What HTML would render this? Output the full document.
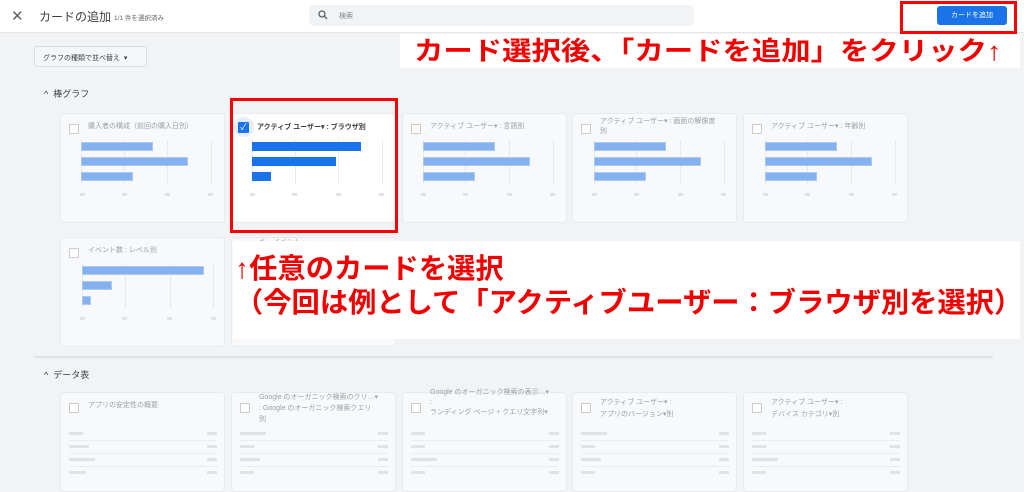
<!DOCTYPE html>
<html><head><meta charset="utf-8"><style>
*{margin:0;padding:0;box-sizing:border-box}
body{width:1024px;height:477px;overflow:hidden;background:#f1f3f4;font-family:"Liberation Sans","Noto Sans CJK JP",sans-serif;position:relative;color:#3c4043}
.a{position:absolute}
.card{position:absolute;width:165px;background:#f8f9fa;border:1px solid #e8eaed;border-radius:4px}
.cb{position:absolute;left:8px;top:10px;width:10px;height:10px;border:1px solid #c8cacd;border-radius:1px;background:#fff}
.t{position:absolute;left:27px;top:8px;font-size:7px;color:#9aa0a6;line-height:10px;width:135px;white-space:nowrap;overflow:hidden}
.g{position:absolute;width:1px;background:#e6e8ea}
.bar{position:absolute;height:9px;background:#85b2ee;border:1px solid #a9c8f2}
.tk{position:absolute;height:3px;width:5px;background:#e0e2e4}
.row{position:absolute;height:3px;background:#e0e2e4}
.ln{position:absolute;height:1px;background:#ebedef}
.red{color:#f20000;font-weight:bold;transform-origin:0 0}
</style></head><body>
<div class="a" style="left:0;top:0;width:1024px;height:33px;background:#fff;border-bottom:1px solid #e6e6e6"></div>
<div class="a" style="left:11px;top:7px;font-size:15px;color:#5f6368">✕</div>
<div class="a" style="left:39px;top:8px;font-size:12px;color:#3c4043">カードの追加</div>
<div class="a" style="left:114px;top:12px;font-size:6.5px;color:#5f6368">1/1 件を選択済み</div>
<div class="a" style="left:309px;top:5px;width:385px;height:21px;background:#f1f3f4;border-radius:5px"></div>
<svg class="a" style="left:318px;top:10px" width="10" height="10" viewBox="0 0 10 10"><circle cx="4" cy="4" r="3" fill="none" stroke="#5f6368" stroke-width="1.3"/><path d="M6.2 6.2L9 9" stroke="#5f6368" stroke-width="1.3"/></svg>
<div class="a" style="left:339px;top:11px;font-size:7px;color:#80868b">検索</div>
<div class="a" style="left:937px;top:6px;width:70px;height:19px;background:#1a73e8;border-radius:3px;color:#fff;font-size:7px;text-align:center;line-height:19px">カードを追加</div>
<div class="a" style="left:900px;top:1px;width:117px;height:33px;border:3px solid #f00"></div>

<div class="a" style="left:34px;top:46px;width:113px;height:21px;border:1px solid #dadce0;border-radius:3px;background:#f5f6f7;font-size:7px;color:#3c4043;padding:6px 0 0 8px">グラフの種類で並べ替え&nbsp;&nbsp;▾</div>
<div class="a" style="left:400px;top:34px;width:620px;height:34px;background:#fff"></div>
<div class="a red" style="left:414px;top:35px;font-size:26px;line-height:32px;white-space:nowrap;transform:scaleX(1.13)">カード選択後、「カードを追加」をクリック↑</div>

<div class="a" style="left:44px;top:87px;font-size:9px;color:#3c4043">^&nbsp;&nbsp;棒グラフ</div>

<div class="card" style="left:60px;top:113px;height:110px"><div class="cb"></div><div class="t">購入者の構成（前回の購入日別）</div></div>
<div class="card" style="left:231px;top:113px;height:110px;background:#fff"></div>
<div class="card" style="left:402px;top:113px;height:110px"><div class="cb"></div><div class="t">アクティブ ユーザー▾ : 言語別</div></div>
<div class="card" style="left:572px;top:113px;height:110px"><div class="cb"></div><div class="t" style="top:3px">アクティブ ユーザー▾ : 画面の解像度<br>別</div></div>
<div class="card" style="left:743px;top:113px;height:110px"><div class="cb"></div><div class="t">アクティブ ユーザー▾ : 年齢別</div></div>

<div class="g" style="left:81px;top:140px;height:44px"></div><div class="g" style="left:124px;top:140px;height:44px"></div><div class="g" style="left:167px;top:140px;height:44px"></div><div class="g" style="left:211px;top:140px;height:44px"></div>
<div class="bar" style="left:81px;top:142px;width:72px"></div><div class="bar" style="left:81px;top:157px;width:107px"></div><div class="bar" style="left:81px;top:172px;width:52px"></div>
<div class="tk" style="left:80px;top:193px"></div><div class="tk" style="left:122px;top:193px"></div><div class="tk" style="left:165px;top:193px"></div><div class="tk" style="left:208px;top:193px"></div>
<div class="g" style="left:252px;top:140px;height:44px"></div><div class="g" style="left:295px;top:140px;height:44px"></div><div class="g" style="left:338px;top:140px;height:44px"></div><div class="g" style="left:382px;top:140px;height:44px"></div>
<div class="bar" style="left:252px;top:142px;width:109px;background:#1a73e8;border-color:#1a73e8"></div><div class="bar" style="left:252px;top:157px;width:84px;background:#1a73e8;border-color:#1a73e8"></div><div class="bar" style="left:252px;top:172px;width:19px;background:#1a73e8;border-color:#1a73e8"></div>
<div class="tk" style="left:250px;top:193px"></div><div class="tk" style="left:292px;top:193px"></div><div class="tk" style="left:336px;top:193px"></div><div class="tk" style="left:379px;top:193px"></div>
<div class="a" style="left:234px;top:117px;width:20px;height:20px;border-radius:50%;background:#e3edfb"></div>
<div class="a" style="left:238px;top:122px;width:11px;height:11px;background:#1a73e8;border-radius:1px;color:#fff;font-size:9px;line-height:11px;text-align:center">✓</div>
<div class="a" style="left:257px;top:122px;font-size:7px;font-weight:bold;color:#3c4043">アクティブ ユーザー▾ : ブラウザ別</div>
<div class="g" style="left:423px;top:140px;height:44px"></div><div class="g" style="left:465px;top:140px;height:44px"></div><div class="g" style="left:509px;top:140px;height:44px"></div><div class="g" style="left:553px;top:140px;height:44px"></div>
<div class="bar" style="left:423px;top:142px;width:72px"></div><div class="bar" style="left:423px;top:157px;width:107px"></div><div class="bar" style="left:423px;top:172px;width:52px"></div>
<div class="tk" style="left:421px;top:193px"></div><div class="tk" style="left:463px;top:193px"></div><div class="tk" style="left:507px;top:193px"></div><div class="tk" style="left:550px;top:193px"></div>
<div class="g" style="left:594px;top:140px;height:44px"></div><div class="g" style="left:636px;top:140px;height:44px"></div><div class="g" style="left:680px;top:140px;height:44px"></div><div class="g" style="left:724px;top:140px;height:44px"></div>
<div class="bar" style="left:594px;top:142px;width:72px"></div><div class="bar" style="left:594px;top:157px;width:107px"></div><div class="bar" style="left:594px;top:172px;width:52px"></div>
<div class="tk" style="left:592px;top:193px"></div><div class="tk" style="left:634px;top:193px"></div><div class="tk" style="left:678px;top:193px"></div><div class="tk" style="left:721px;top:193px"></div>
<div class="g" style="left:765px;top:140px;height:44px"></div><div class="g" style="left:807px;top:140px;height:44px"></div><div class="g" style="left:851px;top:140px;height:44px"></div><div class="g" style="left:895px;top:140px;height:44px"></div>
<div class="bar" style="left:765px;top:142px;width:72px"></div><div class="bar" style="left:765px;top:157px;width:107px"></div><div class="bar" style="left:765px;top:172px;width:52px"></div>
<div class="tk" style="left:763px;top:193px"></div><div class="tk" style="left:805px;top:193px"></div><div class="tk" style="left:849px;top:193px"></div><div class="tk" style="left:892px;top:193px"></div>

<div class="a" style="left:230px;top:98px;width:168px;height:135px;border:3px solid #f00"></div>

<div class="card" style="left:60px;top:237px;height:110px"><div class="cb"></div><div class="t">イベント数 : レベル別</div></div>
<div class="card" style="left:231px;top:237px;height:110px"><div class="t" style="top:0">キーイベント :</div></div>
<div class="g" style="left:82px;top:264px;height:44px"></div><div class="g" style="left:125px;top:264px;height:44px"></div><div class="g" style="left:170px;top:264px;height:44px"></div><div class="g" style="left:213px;top:264px;height:44px"></div>
<div class="bar" style="left:82px;top:266px;width:122px"></div><div class="bar" style="left:82px;top:281px;width:30px"></div><div class="bar" style="left:82px;top:296px;width:9px"></div>
<div class="tk" style="left:80px;top:317px"></div><div class="tk" style="left:122px;top:317px"></div><div class="tk" style="left:167px;top:317px"></div><div class="tk" style="left:211px;top:317px"></div>

<div class="a" style="left:233px;top:241px;width:787px;height:98px;background:#fff"></div>
<div class="a red" style="left:235px;top:252px;font-size:28px;line-height:34px;white-space:nowrap;transform:scaleX(1.01)">↑任意のカードを選択<br>（今回は例として「アクティブユーザー：ブラウザ別を選択）</div>

<div class="a" style="left:35px;top:356px;width:958px;height:2px;background:#e0e2e4"></div>
<div class="a" style="left:44px;top:368px;font-size:9px;color:#3c4043">^&nbsp;&nbsp;データ表</div>

<div class="card" style="left:60px;top:392px;height:100px"><div class="cb"></div><div class="t">アプリの安定性の概要</div></div>
<div class="card" style="left:231px;top:392px;height:100px"><div class="cb"></div><div class="t" style="top:-1px;line-height:11px">Google のオーガニック検索のクリ…▾<br>: Google のオーガニック検索クエリ<br>別</div></div>
<div class="card" style="left:402px;top:392px;height:100px"><div class="cb"></div><div class="t" style="top:-5px">Google のオーガニック検索の表示…▾<br>:<br>ランディング ページ + クエリ文字列▾</div></div>
<div class="card" style="left:572px;top:392px;height:100px"><div class="cb"></div><div class="t" style="top:4px;line-height:12px">アクティブ ユーザー▾ :<br>アプリのバージョン▾別</div></div>
<div class="card" style="left:743px;top:392px;height:100px"><div class="cb"></div><div class="t" style="top:4px;line-height:12px">アクティブ ユーザー▾ :<br>デバイス カテゴリ▾別</div></div>

<div class="row" style="left:69px;top:432px;width:14px"></div><div class="row" style="left:207px;top:432px;width:10px"></div><div class="ln" style="left:69px;top:440px;width:148px"></div>
<div class="row" style="left:69px;top:445px;width:20px"></div><div class="row" style="left:207px;top:445px;width:10px"></div><div class="ln" style="left:69px;top:453px;width:148px"></div>
<div class="row" style="left:69px;top:458px;width:26px"></div><div class="row" style="left:207px;top:458px;width:10px"></div><div class="ln" style="left:69px;top:466px;width:148px"></div>
<div class="row" style="left:69px;top:471px;width:17px"></div><div class="row" style="left:207px;top:471px;width:10px"></div>

<div class="row" style="left:240px;top:432px;width:26px"></div><div class="row" style="left:378px;top:432px;width:10px"></div><div class="ln" style="left:240px;top:440px;width:148px"></div>
<div class="row" style="left:240px;top:445px;width:14px"></div><div class="row" style="left:378px;top:445px;width:10px"></div><div class="ln" style="left:240px;top:453px;width:148px"></div>
<div class="row" style="left:240px;top:458px;width:20px"></div><div class="row" style="left:378px;top:458px;width:10px"></div><div class="ln" style="left:240px;top:466px;width:148px"></div>
<div class="row" style="left:240px;top:471px;width:14px"></div><div class="row" style="left:378px;top:471px;width:10px"></div>

<div class="row" style="left:411px;top:432px;width:14px"></div><div class="row" style="left:549px;top:432px;width:10px"></div><div class="ln" style="left:411px;top:440px;width:148px"></div>
<div class="row" style="left:411px;top:445px;width:14px"></div><div class="row" style="left:549px;top:445px;width:10px"></div><div class="ln" style="left:411px;top:453px;width:148px"></div>
<div class="row" style="left:411px;top:458px;width:26px"></div><div class="row" style="left:549px;top:458px;width:10px"></div><div class="ln" style="left:411px;top:466px;width:148px"></div>
<div class="row" style="left:411px;top:471px;width:14px"></div><div class="row" style="left:549px;top:471px;width:10px"></div>

<div class="row" style="left:581px;top:432px;width:26px"></div><div class="row" style="left:719px;top:432px;width:10px"></div><div class="ln" style="left:581px;top:440px;width:148px"></div>
<div class="row" style="left:581px;top:445px;width:14px"></div><div class="row" style="left:719px;top:445px;width:10px"></div><div class="ln" style="left:581px;top:453px;width:148px"></div>
<div class="row" style="left:581px;top:458px;width:20px"></div><div class="row" style="left:719px;top:458px;width:10px"></div><div class="ln" style="left:581px;top:466px;width:148px"></div>
<div class="row" style="left:581px;top:471px;width:14px"></div><div class="row" style="left:719px;top:471px;width:10px"></div>

<div class="row" style="left:752px;top:432px;width:14px"></div><div class="row" style="left:890px;top:432px;width:10px"></div><div class="ln" style="left:752px;top:440px;width:148px"></div>
<div class="row" style="left:752px;top:445px;width:14px"></div><div class="row" style="left:890px;top:445px;width:10px"></div><div class="ln" style="left:752px;top:453px;width:148px"></div>
<div class="row" style="left:752px;top:458px;width:26px"></div><div class="row" style="left:890px;top:458px;width:10px"></div><div class="ln" style="left:752px;top:466px;width:148px"></div>
<div class="row" style="left:752px;top:471px;width:14px"></div><div class="row" style="left:890px;top:471px;width:10px"></div>
</body></html>
